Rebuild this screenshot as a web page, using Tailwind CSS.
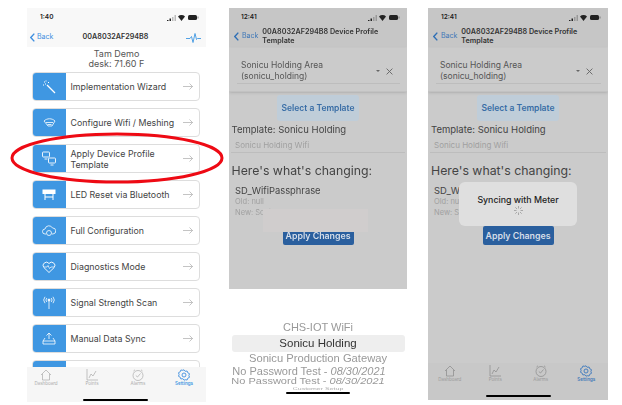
<!DOCTYPE html>
<html lang="en">

<head>
    <meta charset="UTF-8">
    <meta name="viewport" content="width=device-width, initial-scale=1.0">
    <title>Device Profile Template</title>
    <script src="https://cdn.jsdelivr.net/npm/@tailwindcss/browser@4"></script>
</head>

<body class="bg-white">
    <div class="relative w-[622px] h-[405px] overflow-hidden bg-white font-['Inter','Liberation_Sans',sans-serif] text-[#333]">

        <!-- phones row -->
        <div class="flex items-start pt-[8px] pl-[27px] blur-[0.3px]">

            <!-- phone 1: settings menu -->
            <div class="relative w-[179px] h-[394px] overflow-hidden bg-white flex flex-col">
                <div class="h-[39px] bg-[#f8f8f8] shrink-0">
                    <div class="flex items-center justify-between h-[18px] pl-[13px] pr-[7px] pt-[1px]">
                        <span class="text-[6.500px] font-semibold text-[#222]">1:40</span>
                        <svg width="32" height="7" viewBox="0 0 32 7"><path d="M0 6h1.500v1H0zM2.500 4.500h1.500V7H2.500z" fill="#222"/><path d="M5 3h1.500v4H5zM7.500 1h1.500v6H7.500z" fill="#bbb"/><path d="M11 2.500a5 5 0 0 1 7 0L14.500 7z" fill="#222"/><rect x="21" y="1" width="9" height="5" rx="1.500" fill="#222"/><rect x="30.500" y="2.500" width="1" height="2" fill="#888"/></svg>
                    </div>
                    <div class="grid grid-cols-[40px_1fr_40px] items-center pl-[3px] pr-[5px] h-[23px]">
                        <div class="flex items-center gap-[2px] text-[#3f8fe0]">
                            <svg width="5" height="9" viewBox="0 0 5 9" fill="none" stroke="currentColor" stroke-width="1.400"><path d="M4.300 .6.800 4.500l3.500 3.900"/></svg>
                            <span class="text-[7px]">Back</span>
                        </div>
                        <span class="text-[7.200px] font-semibold text-[#333] text-center">00A8032AF294B8</span>
                        <svg class="justify-self-end" width="15" height="10" viewBox="0 0 15 10" fill="none" stroke="#3f97e2" stroke-width="0.900"><path d="M0 5.500h4l1.500-2 1.500 6 2-9 1.500 6 1-1H15"/></svg>
                    </div>
                </div>

                <div class="text-center text-[9px] leading-[10px] text-[#555] pt-[2px]">
                    <div>Tam Demo</div>
                    <div>desk: 71.60 F</div>
                </div>

                <div class="flex flex-col gap-[7px] pl-[4.500px] pr-[6px] pt-[3px]">
                    <div class="flex h-[29px] rounded-[4px] border border-[#ddd] overflow-hidden bg-white">
                        <div class="w-[33px] shrink-0 bg-[#3f97e2] flex items-center justify-center">
                            <svg width="14" height="14" viewBox="0 0 14 14" fill="none" stroke="#fff" stroke-width="1.300"><path d="M5 5l8 8"/><path d="M2 2h1M4 .5v1M1 5h1M6 2.500h1M3 4h1" stroke-width="1"/></svg>
                        </div>
                        <div class="flex-1 flex items-center pl-[5px] text-[8.800px] text-[#444]">Implementation Wizard</div>
                        <div class="flex items-center pr-[6px]"><svg width="10" height="7" viewBox="0 0 10 7" fill="none" stroke="#aaa" stroke-width="0.700"><path d="M0 3.500h9.500M6.500.5l3 3-3 3"/></svg></div>
                    </div>
                    <div class="flex h-[29px] rounded-[4px] border border-[#ddd] overflow-hidden bg-white">
                        <div class="w-[33px] shrink-0 bg-[#3f97e2] flex items-center justify-center">
                            <svg width="13" height="9" viewBox="0 0 13 9" fill="none" stroke="#fff" stroke-width="0.800"><path d="M1 3C4 0 9 0 12 3L9 8H5zM3 4.500h7M4.500 6.500h4"/></svg>
                        </div>
                        <div class="flex-1 flex items-center pl-[5px] text-[8.800px] text-[#444]">Configure Wifi / Meshing</div>
                        <div class="flex items-center pr-[6px]"><svg width="10" height="7" viewBox="0 0 10 7" fill="none" stroke="#aaa" stroke-width="0.700"><path d="M0 3.500h9.500M6.500.5l3 3-3 3"/></svg></div>
                    </div>
                    <div class="flex h-[29px] rounded-[4px] border border-[#ddd] overflow-hidden bg-white">
                        <div class="w-[33px] shrink-0 bg-[#3f97e2] flex items-center justify-center">
                            <svg width="14" height="15" viewBox="0 0 14 15" fill="none" stroke="#fff" stroke-width="0.900"><rect x=".5" y="1" width="7" height="5" rx=".8"/><path d="M2.500 8h3"/><rect x="6.500" y="7" width="7" height="5" rx=".8"/><path d="M8.500 14h3"/></svg>
                        </div>
                        <div class="flex-1 flex items-center pl-[5px] text-[8.800px] leading-[11px] text-[#444]">Apply Device Profile<br>Template</div>
                        <div class="flex items-center pr-[6px]"><svg width="10" height="7" viewBox="0 0 10 7" fill="none" stroke="#aaa" stroke-width="0.700"><path d="M0 3.500h9.500M6.500.5l3 3-3 3"/></svg></div>
                    </div>
                    <div class="flex h-[29px] rounded-[4px] border border-[#ddd] overflow-hidden bg-white">
                        <div class="w-[33px] shrink-0 bg-[#3f97e2] flex items-center justify-center">
                            <svg width="14" height="11" viewBox="0 0 14 11" fill="none" stroke="#fff" stroke-width="1"><rect x="1" y="1" width="12" height="3.500" fill="#fff"/><path d="M3 4.500V11M11 4.500V11M3 8h8"/></svg>
                        </div>
                        <div class="flex-1 flex items-center pl-[5px] text-[8.800px] text-[#444]">LED Reset via Bluetooth</div>
                        <div class="flex items-center pr-[6px]"><svg width="10" height="7" viewBox="0 0 10 7" fill="none" stroke="#aaa" stroke-width="0.700"><path d="M0 3.500h9.500M6.500.5l3 3-3 3"/></svg></div>
                    </div>
                    <div class="flex h-[29px] rounded-[4px] border border-[#ddd] overflow-hidden bg-white">
                        <div class="w-[33px] shrink-0 bg-[#3f97e2] flex items-center justify-center">
                            <svg width="14" height="12" viewBox="0 0 14 12" fill="none" stroke="#fff" stroke-width="0.800"><path d="M4 9H3a2.500 2.500 0 0 1 0-5 4 4 0 0 1 7.500-1A3 3 0 0 1 11 9h-1"/><circle cx="7" cy="8" r="2.500"/></svg>
                        </div>
                        <div class="flex-1 flex items-center pl-[5px] text-[8.800px] text-[#444]">Full Configuration</div>
                        <div class="flex items-center pr-[6px]"><svg width="10" height="7" viewBox="0 0 10 7" fill="none" stroke="#aaa" stroke-width="0.700"><path d="M0 3.500h9.500M6.500.5l3 3-3 3"/></svg></div>
                    </div>
                    <div class="flex h-[29px] rounded-[4px] border border-[#ddd] overflow-hidden bg-white">
                        <div class="w-[33px] shrink-0 bg-[#3f97e2] flex items-center justify-center">
                            <svg width="14" height="12" viewBox="0 0 14 12" fill="none" stroke="#fff" stroke-width="0.900"><path d="M7 11.500 1.800 6.500a3.200 3.200 0 0 1 5.200-4 3.200 3.200 0 0 1 5.200 4z"/><path d="M2 6h3l1-1.500 1.500 3L9 6h3" stroke-width="0.700"/></svg>
                        </div>
                        <div class="flex-1 flex items-center pl-[5px] text-[8.800px] text-[#444]">Diagnostics Mode</div>
                        <div class="flex items-center pr-[6px]"><svg width="10" height="7" viewBox="0 0 10 7" fill="none" stroke="#aaa" stroke-width="0.700"><path d="M0 3.500h9.500M6.500.5l3 3-3 3"/></svg></div>
                    </div>
                    <div class="flex h-[29px] rounded-[4px] border border-[#ddd] overflow-hidden bg-white">
                        <div class="w-[33px] shrink-0 bg-[#3f97e2] flex items-center justify-center">
                            <svg width="12" height="13" viewBox="0 0 12 13" fill="none" stroke="#fff" stroke-width="0.800"><circle cx="6" cy="4" r="1" fill="#fff"/><path d="M6 5v8M3.800 2a3 3 0 0 0 0 4M8.200 2a3 3 0 0 1 0 4M2 .8a5 5 0 0 0 0 6.400M10 .8a5 5 0 0 1 0 6.400"/></svg>
                        </div>
                        <div class="flex-1 flex items-center pl-[5px] text-[8.800px] text-[#444]">Signal Strength Scan</div>
                        <div class="flex items-center pr-[6px]"><svg width="10" height="7" viewBox="0 0 10 7" fill="none" stroke="#aaa" stroke-width="0.700"><path d="M0 3.500h9.500M6.500.5l3 3-3 3"/></svg></div>
                    </div>
                    <div class="flex h-[29px] rounded-[4px] border border-[#ddd] overflow-hidden bg-white">
                        <div class="w-[33px] shrink-0 bg-[#3f97e2] flex items-center justify-center">
                            <svg width="14" height="13" viewBox="0 0 14 13" fill="none" stroke="#fff" stroke-width="0.800"><path d="M7 7V1M4.500 3.500 7 1l2.500 2.500M3 6 1 9v3h12V9l-2-3M1 9h12"/></svg>
                        </div>
                        <div class="flex-1 flex items-center pl-[5px] text-[8.800px] text-[#444]">Manual Data Sync</div>
                        <div class="flex items-center pr-[6px]"><svg width="10" height="7" viewBox="0 0 10 7" fill="none" stroke="#aaa" stroke-width="0.700"><path d="M0 3.500h9.500M6.500.5l3 3-3 3"/></svg></div>
                    </div>
                    <div class="flex h-[29px] rounded-[4px] border border-[#ddd] overflow-hidden bg-white">
                        <div class="w-[33px] shrink-0 bg-[#3f97e2]"></div>
                    </div>
                </div>

                <!-- tab bar -->
                <div class="absolute left-0 right-0 bottom-0 h-[35px] bg-[#f6f6f6]">
                    <div class="grid grid-cols-[repeat(4,46px)] ml-[-4px] pt-[2px] text-[4.500px] text-[#aaa] text-center">
                        <div class="flex flex-col items-center">
                            <svg width="12" height="12" viewBox="0 0 12 12" fill="none" stroke="#aaa" stroke-width="0.700"><path d="M1 6 6 1l5 5M2.500 5v6h7V5"/></svg>
                            <span>Dashboard</span>
                        </div>
                        <div class="flex flex-col items-center">
                            <svg width="12" height="12" viewBox="0 0 12 12" fill="none" stroke="#aaa" stroke-width="0.700"><path d="M1 0v11h11M3 9l2-4 2 2 3-5"/></svg>
                            <span>Points</span>
                        </div>
                        <div class="flex flex-col items-center">
                            <svg width="12" height="12" viewBox="0 0 12 12" fill="none" stroke="#aaa" stroke-width="0.700"><circle cx="6" cy="6.500" r="5"/><path d="M3.800 6.500 5.500 8l3-3.500M1.500 2 3 .8M10.500 2 9 .8"/></svg>
                            <span>Alarms</span>
                        </div>
                        <div class="flex flex-col items-center text-[#3f97e2] font-semibold">
                            <svg width="12" height="12" viewBox="0 0 12 12" fill="none" stroke="#3f8fe0" stroke-width="0.900"><path d="M6 .8l1.200 1.500 1.900-.3.700 1.800 1.700.9-.6 1.800.6 1.800-1.700.9-.7 1.800-1.900-.3L6 11.200l-1.200-1.500-1.900.3-.7-1.800-1.700-.9.600-1.800-.6-1.800 1.700-.9.700-1.800 1.900.3z"/><circle cx="6" cy="6" r="2"/></svg>
                            <span>Settings</span>
                        </div>
                    </div>
                    <div class="absolute bottom-[1px] left-[56px] w-[65px] h-[2px] rounded-full bg-black"></div>
                </div>
            </div>

            <!-- phone 2: template picker -->
            <div class="relative w-[178px] h-[392px] ml-[23px] overflow-hidden bg-white flex flex-col">
                <div class="h-[281px] bg-[#cbcbcb] flex flex-col shrink-0">
                    <div class="h-[39px] bg-[#c6c6c6] shrink-0">
                        <div class="flex items-center justify-between h-[19px] pl-[12px] pr-[7px]">
                            <span class="text-[6.500px] font-semibold text-[#222]">12:41</span>
                            <svg width="32" height="7" viewBox="0 0 32 7"><path d="M0 6h1.500v1H0zM2.500 4.500h1.500V7H2.500z" fill="#222"/><path d="M5 3h1.500v4H5zM7.500 1h1.500v6H7.500z" fill="#999"/><path d="M11 2.500a5 5 0 0 1 7 0L14.500 7z" fill="#222"/><rect x="21" y="1" width="9" height="5" rx="1.500" fill="#222"/><rect x="30.500" y="2.500" width="1" height="2" fill="#777"/></svg>
                        </div>
                        <div class="flex items-center pl-[5px]">
                            <svg width="5" height="9" viewBox="0 0 5 9" fill="none" stroke="#2f6fb5" stroke-width="1.400"><path d="M4.300 .6.800 4.500l3.500 3.900"/></svg>
                            <span class="text-[7px] text-[#3f78b8] ml-[3px]">Back</span>
                            <span class="text-[7.200px] leading-[9px] font-semibold text-[#333] ml-[4px]">00A8032AF294B8 Device Profile<br>Template</span>
                        </div>
                    </div>
                    <div class="h-[44px] mt-[1px] shadow-sm border-b border-[#c2c2c2] pl-[8px] pr-[7px] pt-[12px]">
                        <div class="flex items-center border-b border-[#bdbdbd] pb-[1px] pl-[4px]">
                            <div class="flex-1 text-[8.500px] leading-[11px] text-[#555]">Sonicu Holding Area<br>(sonicu_holding)</div>
                            <div class="w-0 h-0 border-x-[2px] border-x-transparent border-t-[2px] border-t-[#666]"></div>
                            <svg class="ml-[6px] mr-[7px]" width="7" height="7" viewBox="0 0 6 6" stroke="#666" stroke-width="0.800"><path d="M.5.500l5 5M5.500.500l-5 5"/></svg>
                        </div>
                    </div>
                    <div class="flex justify-center mt-[3px]">
                        <div class="w-[82px] h-[26px] rounded-[3px] bg-[#bfcdd9] flex items-center justify-center text-[8.500px] font-semibold text-[#386da6]">Select a Template</div>
                    </div>
                    <div class="text-[9.500px] text-[#444] pl-[2.500px] mt-[3px] leading-[12px]">Template: Sonicu Holding</div>
                    <div class="mx-[2px] pl-[4px] pb-[2px] mt-[4px] text-[8px] leading-[10px] text-[#a0a0a0] border-b border-[#bdbdbd]">Sonicu Holding Wifi</div>
                    <div class="text-[12.300px] leading-[16px] text-[#444] pl-[2.500px] mt-[10px]">Here's what's changing:</div>
                    <div class="text-[9.400px] leading-[10px] text-[#444] pl-[6px] mt-[7px]">SD_WifiPassphrase</div>
                    <div class="text-[7.500px] leading-[10px] text-[#a0a0a0] pl-[6px] mt-[1px]">Old: null</div>
                    <div class="text-[7.500px] leading-[10px] text-[#a0a0a0] pl-[6px] mt-[1px]">New: Sonicu</div>
                    <div class="flex justify-center mt-[8px]">
                        <div class="w-[71px] h-[19px] rounded-[2px] bg-[#2a5f9e] flex items-center justify-center text-[8.800px] font-semibold text-[#d5dde8]">Apply Changes</div>
                    </div>
                </div>

                <!-- faded toast -->
                <div class="absolute left-[34px] top-[201px] w-[105px] h-[23px] bg-[#d0cdcd]"></div>

                <!-- picker wheel -->
                <div class="flex flex-col items-center pt-[31px] text-center font-['Liberation_Sans',sans-serif]">
                    <div class="h-[14px] leading-[14px] text-[11px] text-[#999]">CHS-IOT WiFi</div>
                    <div class="w-[173px] h-[17px] rounded-[3px] bg-[#eeeeee] leading-[17px] text-[11.500px] text-[#333] mt-[1px]">Sonicu Holding</div>
                    <div class="h-[14px] leading-[14px] text-[11.200px] text-[#999] mt-[-1px]">Sonicu Production Gateway</div>
                    <div class="h-[12px] leading-[12px] text-[11px] text-[#999] whitespace-nowrap mr-[18px]">No Password Test - <i>08/30/2021</i></div>
                    <div class="h-[9px] leading-[9px] text-[11px] text-[#999] whitespace-nowrap scale-y-75 mr-[20px]">No Password Test - <i>08/30/2021</i></div>
                    <div class="h-[6px] leading-[6px] text-[7px] text-[#aaa] scale-y-50">Customer Setup</div>
                </div>
                <div class="absolute bottom-[6px] left-[57px] w-[64px] h-[2px] rounded-full bg-black"></div>
            </div>

            <!-- phone 3: syncing -->
            <div class="relative w-[180px] h-[392px] ml-[21px] overflow-hidden bg-[#cbcbcb] flex flex-col">
                <div class="h-[39px] bg-[#c6c6c6] shrink-0">
                    <div class="flex items-center justify-between h-[19px] pl-[13px] pr-[7px]">
                        <span class="text-[6.500px] font-semibold text-[#222]">12:41</span>
                        <svg width="32" height="7" viewBox="0 0 32 7"><path d="M0 6h1.500v1H0zM2.500 4.500h1.500V7H2.500z" fill="#222"/><path d="M5 3h1.500v4H5zM7.500 1h1.500v6H7.500z" fill="#999"/><path d="M11 2.500a5 5 0 0 1 7 0L14.500 7z" fill="#222"/><rect x="21" y="1" width="9" height="5" rx="1.500" fill="#222"/><rect x="30.500" y="2.500" width="1" height="2" fill="#777"/></svg>
                    </div>
                    <div class="flex items-center pl-[5px]">
                        <svg width="5" height="9" viewBox="0 0 5 9" fill="none" stroke="#2f6fb5" stroke-width="1.400"><path d="M4.300 .6.800 4.500l3.500 3.900"/></svg>
                        <span class="text-[7px] text-[#3f78b8] ml-[3px]">Back</span>
                        <span class="text-[7.200px] leading-[9px] font-semibold text-[#333] ml-[4px]">00A8032AF294B8 Device Profile<br>Template</span>
                    </div>
                </div>
                <div class="h-[44px] mt-[1px] shadow-sm border-b border-[#c2c2c2] pl-[8px] pr-[7px] pt-[12px]">
                    <div class="flex items-center border-b border-[#bdbdbd] pb-[1px] pl-[4px]">
                        <div class="flex-1 text-[8.500px] leading-[11px] text-[#555]">Sonicu Holding Area<br>(sonicu_holding)</div>
                        <div class="w-0 h-0 border-x-[2px] border-x-transparent border-t-[2px] border-t-[#666]"></div>
                        <svg class="ml-[6px] mr-[8px]" width="7" height="7" viewBox="0 0 6 6" stroke="#666" stroke-width="0.800"><path d="M.5.500l5 5M5.500.500l-5 5"/></svg>
                    </div>
                </div>
                <div class="flex justify-center mt-[3px]">
                    <div class="w-[82px] h-[26px] rounded-[3px] bg-[#bfcdd9] flex items-center justify-center text-[8.500px] font-semibold text-[#386da6]">Select a Template</div>
                </div>
                <div class="text-[9.500px] text-[#444] pl-[3px] mt-[3px] leading-[12px]">Template: Sonicu Holding</div>
                <div class="mx-[2px] pl-[4px] pb-[2px] mt-[4px] text-[8px] leading-[10px] text-[#a0a0a0] border-b border-[#bdbdbd]">Sonicu Holding Wifi</div>
                <div class="text-[12.300px] leading-[16px] text-[#444] pl-[3px] mt-[10px]">Here's what's changing:</div>
                <div class="text-[9.400px] leading-[10px] text-[#444] pl-[6px] mt-[7px]">SD_WifiPassphrase</div>
                <div class="text-[7.500px] leading-[10px] text-[#a0a0a0] pl-[6px] mt-[1px]">Old: null</div>
                <div class="text-[7.500px] leading-[10px] text-[#a0a0a0] pl-[6px] mt-[1px]">New: Sonicu</div>
                <div class="flex justify-center mt-[8px]">
                    <div class="w-[71px] h-[19px] rounded-[2px] bg-[#2a5f9e] flex items-center justify-center text-[8.800px] font-semibold text-[#d5dde8]">Apply Changes</div>
                </div>

                <!-- syncing dialog -->
                <div class="absolute left-[31px] top-[174px] w-[118px] h-[44px] rounded-[6px] bg-[#dfdfdf] flex flex-col items-center pt-[12px]">
                    <div class="text-[8.800px] leading-[11px] font-medium text-[#222]">Syncing with Meter</div>
                    <svg class="mt-[1px]" width="9" height="9" viewBox="0 0 9 9" stroke="#999" stroke-width="0.800"><path d="M4.500 0v2.500M4.500 6.500V9M0 4.500h2.500M6.500 4.500H9M1.300 1.300 3 3M6 6l1.700 1.700M1.300 7.700 3 6M6 3l1.700-1.700"/></svg>
                </div>

                <!-- dimmed tab bar -->
                <div class="absolute left-0 right-0 bottom-0 h-[37px] bg-[#c8c8c8]">
                    <div class="grid grid-cols-[repeat(4,45.500px)] ml-[-1px] pt-[2px] text-[4.500px] text-[#999] text-center">
                        <div class="flex flex-col items-center">
                            <svg width="12" height="12" viewBox="0 0 12 12" fill="none" stroke="#8a8a8a" stroke-width="0.700"><path d="M1 6 6 1l5 5M2.500 5v6h7V5"/></svg>
                            <span>Dashboard</span>
                        </div>
                        <div class="flex flex-col items-center">
                            <svg width="12" height="12" viewBox="0 0 12 12" fill="none" stroke="#8a8a8a" stroke-width="0.700"><path d="M1 0v11h11M3 9l2-4 2 2 3-5"/></svg>
                            <span>Points</span>
                        </div>
                        <div class="flex flex-col items-center">
                            <svg width="12" height="12" viewBox="0 0 12 12" fill="none" stroke="#8a8a8a" stroke-width="0.700"><circle cx="6" cy="6.500" r="5"/><path d="M3.800 6.500 5.500 8l3-3.500M1.500 2 3 .8M10.500 2 9 .8"/></svg>
                            <span>Alarms</span>
                        </div>
                        <div class="flex flex-col items-center text-[#3f78b8] font-semibold">
                            <svg width="12" height="12" viewBox="0 0 12 12" fill="none" stroke="#3b78bd" stroke-width="0.900"><path d="M6 .8l1.200 1.500 1.900-.3.700 1.800 1.700.9-.6 1.800.6 1.800-1.700.9-.7 1.800-1.900-.3L6 11.200l-1.200-1.500-1.900.3-.7-1.800-1.700-.9.600-1.800-.6-1.800 1.700-.9.700-1.800 1.900.3z"/><circle cx="6" cy="6" r="2"/></svg>
                            <span>Settings</span>
                        </div>
                    </div>
                    <div class="absolute bottom-[3px] left-[58px] w-[65px] h-[2px] rounded-full bg-black"></div>
                </div>
            </div>
        </div>

        <!-- red annotation ellipse -->
        <svg class="absolute left-0 top-0" width="622" height="405" fill="none"><ellipse cx="117" cy="158" rx="105" ry="24" stroke="#ee0a14" stroke-width="3"/></svg>
    </div>
</body>

</html>
